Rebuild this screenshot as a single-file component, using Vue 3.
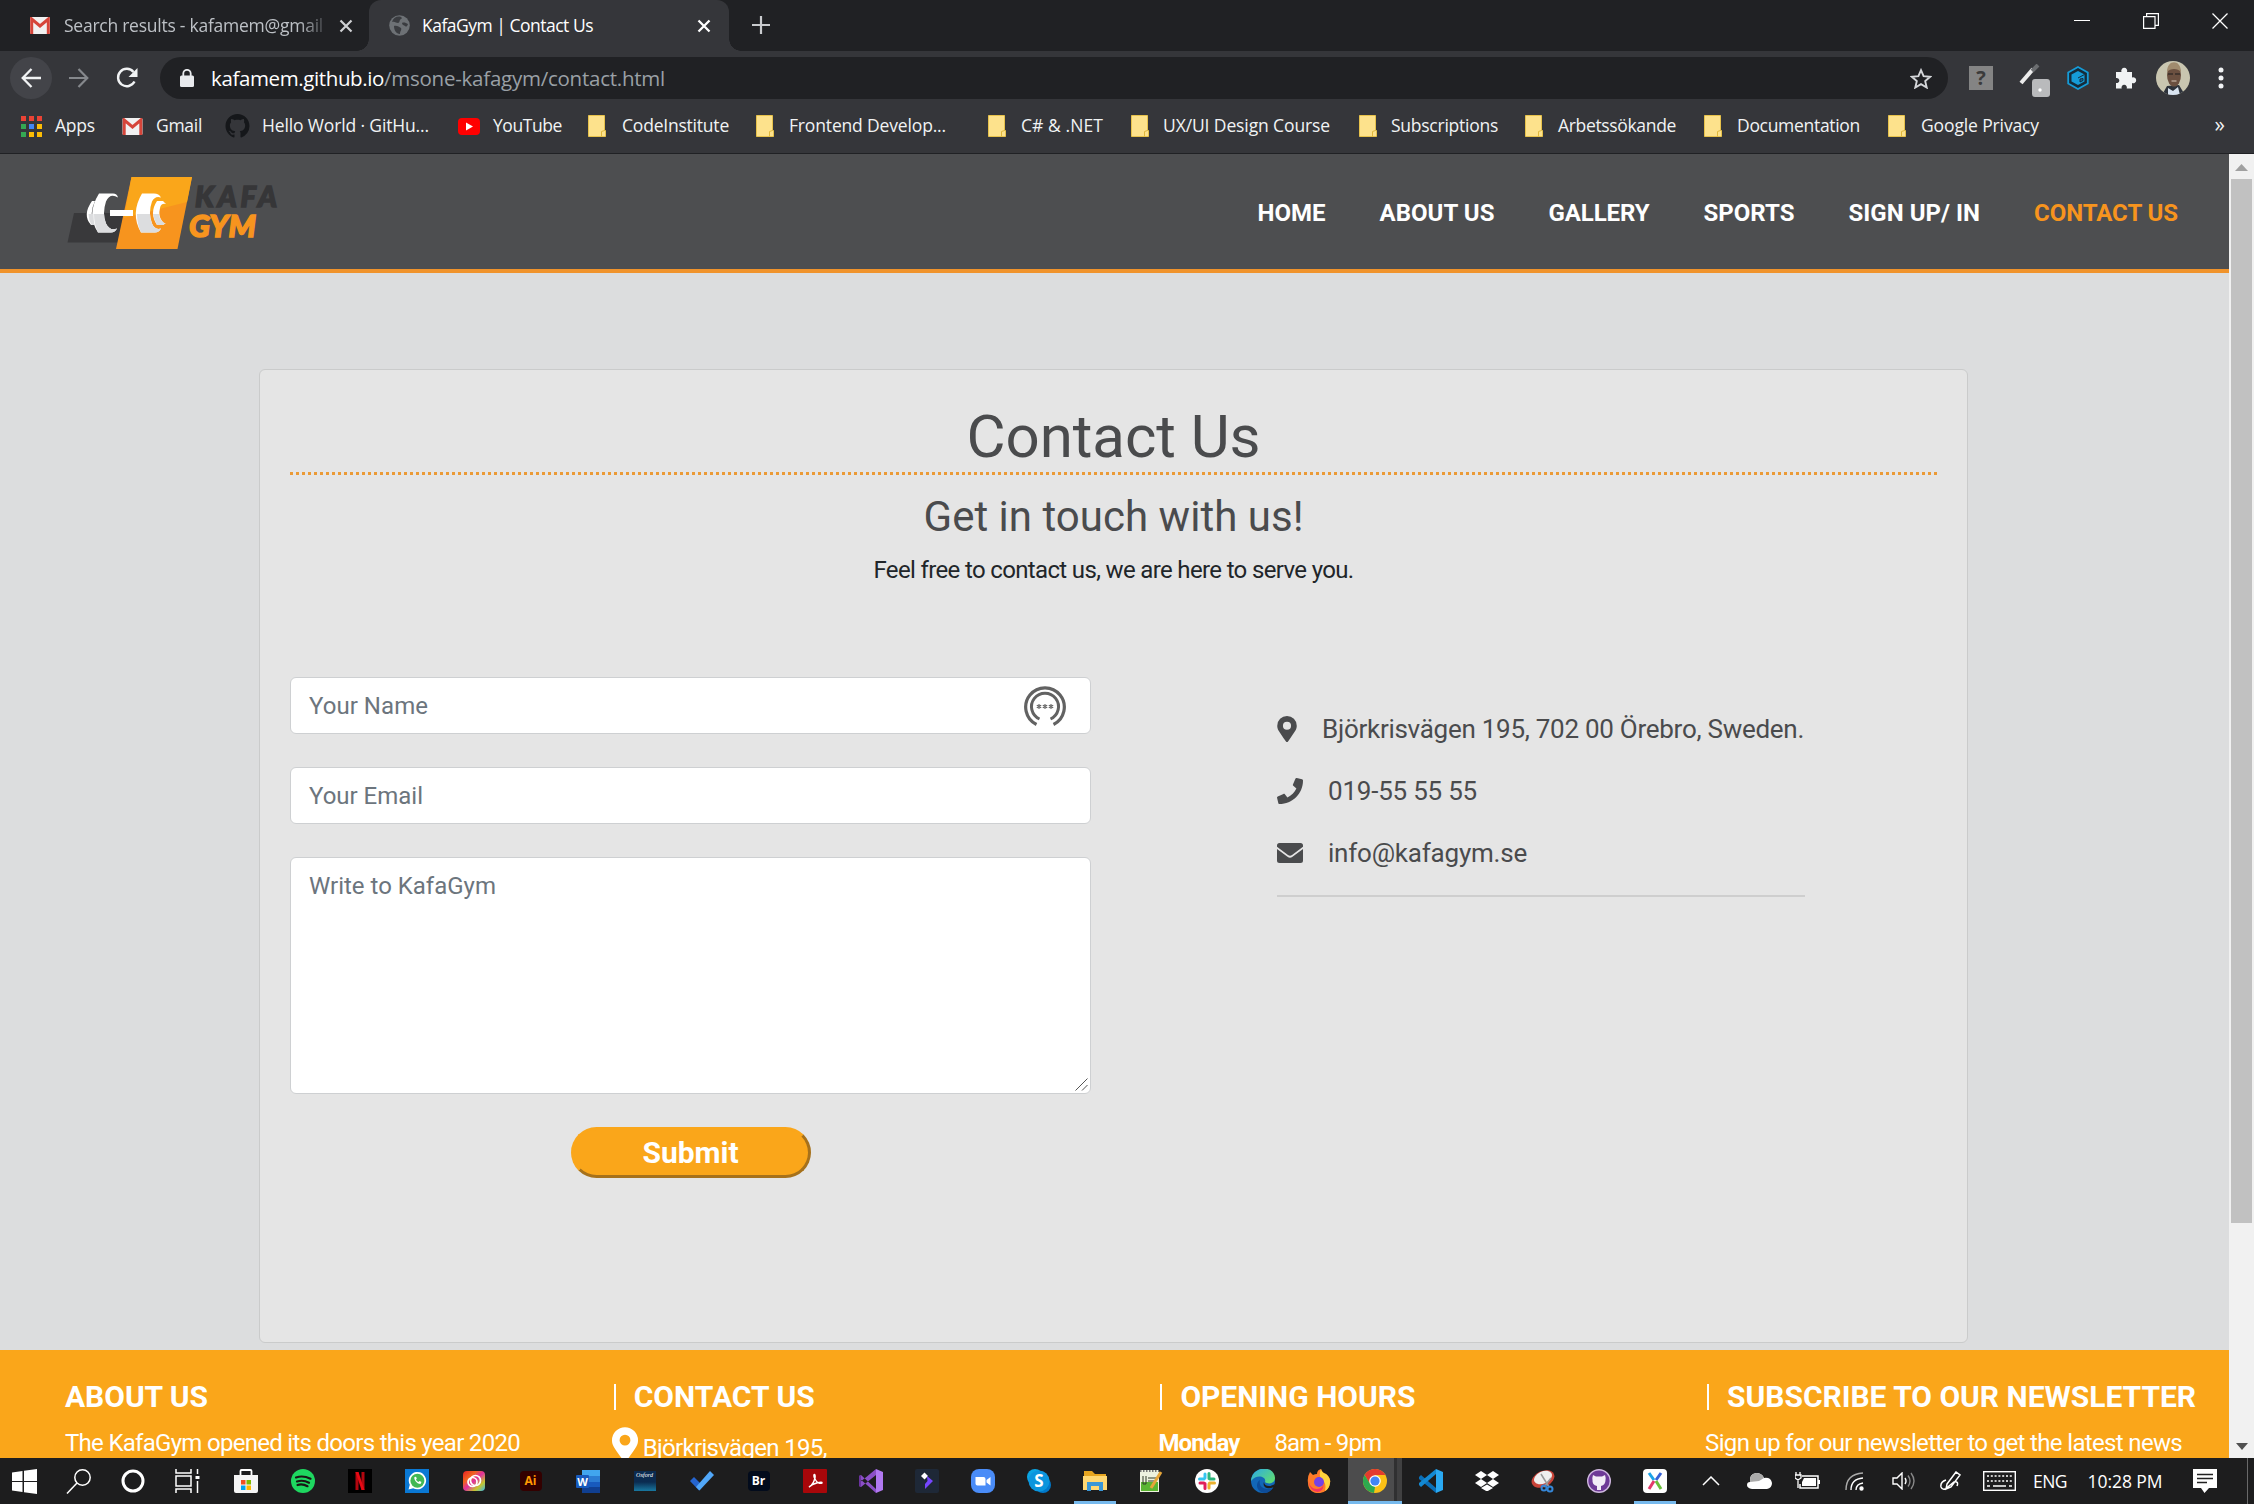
<script setup>
const vFit = {
  mounted(el, { value }) {
    const width = el.getBoundingClientRect().width
    el.style.letterSpacing = `${(value - width) / el.textContent.length}px`
  },
}

const bookmarks = [
  { label: 'Apps', icon: 'apps', slot: 34, text: 40, width: 101 },
  { label: 'Gmail', icon: 'gmail', slot: 34, text: 46, width: 103 },
  { label: 'Hello World · GitHu...', icon: 'github', slot: 37, text: 167, width: 233 },
  { label: 'YouTube', icon: 'youtube', slot: 35, text: 69, width: 130 },
  { label: 'CodeInstitute', icon: 'folder', slot: 34, text: 107, width: 168 },
  { label: 'Frontend Develop...', icon: 'folder', slot: 33, text: 157, width: 232 },
  { label: 'C# & .NET', icon: 'folder', slot: 33, text: 82, width: 143 },
  { label: 'UX/UI Design Course', icon: 'folder', slot: 32, text: 167, width: 228 },
  { label: 'Subscriptions', icon: 'folder', slot: 32, text: 107, width: 166 },
  { label: 'Arbetssökande', icon: 'folder', slot: 33, text: 118, width: 179 },
  { label: 'Documentation', icon: 'folder', slot: 33, text: 123, width: 184 },
  { label: 'Google Privacy', icon: 'folder', slot: 33, text: 118, width: 160 },
]

const nav = [
  { label: 'HOME', width: 68 },
  { label: 'ABOUT US', width: 115 },
  { label: 'GALLERY', width: 101 },
  { label: 'SPORTS', width: 91 },
  { label: 'SIGN UP/ IN', width: 131.5 },
  { label: 'CONTACT US', width: 144, active: true },
]

const apps = [
  'store', 'spotify', 'netflix', 'whatsapp', 'cc', 'ai', 'word', 'oxford', 'todo', 'br',
  'acrobat', 'vs', 'filmora', 'zoom', 'skype', 'explorer', 'notepad', 'slack', 'edge',
  'firefox', 'chrome', 'vscode', 'dropbox', 'snip', 'ghdesktop', 'xd',
]
</script>

<template>
  <div class="screen">
    <div class="tabs">
      <div class="tab tab-idle">
        <svg class="fav" width="20" height="17" viewBox="0 0 20 17"><rect width="20" height="17" rx="1.5" fill="#f1f1f1"/><path d="M1.7 17V2L10 9l8.300-7v15" fill="none" stroke="#d6453a" stroke-width="3"/></svg>
        <span class="tab-title faded"><span v-fit="259">Search results - kafamem@gmail</span></span>
        <svg class="tab-x" width="14" height="14" viewBox="0 0 14 14"><path d="M1.500 1.500l11 11M12.500 1.500l-11 11" stroke="#cfd1d4" stroke-width="2.200"/></svg>
      </div>
      <div class="tab tab-active">
        <svg class="fav" width="21" height="21" viewBox="0 0 21 21"><circle cx="10.500" cy="10.500" r="10.300" fill="#6d7175"/><path d="M3 7c3-1 4 1 6 1s1-3 3-4 0-2-1-2.500C7 1 4 3 3 7zM5 11c3-1 5 1 7 2 1 2-1 3-1 6-4 0-6-4-6-8zM13 8c2-1 4 0 6 1-1 3-2 3-3 2s-3-1-3-3z" fill="#3a3c40"/></svg>
        <span class="tab-title"><span v-fit="171">KafaGym | Contact Us</span></span>
        <svg class="tab-x" width="14" height="14" viewBox="0 0 14 14"><path d="M1.500 1.500l11 11M12.500 1.500l-11 11" stroke="#fff" stroke-width="2.300"/></svg>
      </div>
      <svg class="plus" width="18" height="18" viewBox="0 0 18 18"><path d="M9 0v18M0 9h18" stroke="#c9cbce" stroke-width="2.200"/></svg>
      <div class="window-buttons">
        <svg width="16" height="16" viewBox="0 0 16 16"><path d="M0 7.500h16" stroke="#fff"/></svg>
        <svg width="16" height="16" viewBox="0 0 16 16" fill="none" stroke="#fff" stroke-width="1.200"><path d="M.600 3.600h11.400v11.800H.600zM3.600 3.500V.600h11.800v11.800H12"/></svg>
        <svg width="16" height="16" viewBox="0 0 16 16"><path d="M.500.500l15 15M15.500.500l-15 15" stroke="#fff" stroke-width="1.300"/></svg>
      </div>
    </div>

    <div class="toolbar">
      <div class="round"><svg width="20" height="20" viewBox="0 0 20 20" fill="none" stroke="#f1f3f4" stroke-width="2.300"><path d="M20 10H2M10.500 1L1.700 10l8.800 9"/></svg></div>
      <svg class="forward" width="20" height="20" viewBox="0 0 20 20" fill="none" stroke="#85888c" stroke-width="2.200"><path d="M0 10h18M9.500 1l8.800 9-8.800 9"/></svg>
      <svg class="reload" width="22" height="22" viewBox="0 0 22 22"><path d="M18.500 14.500A8.700 8.700 0 1 1 17.500 5" fill="none" stroke="#f1f3f4" stroke-width="2.400"/><path d="M21.500 1v9h-9z" fill="#f1f3f4"/></svg>
      <div class="omnibox">
        <svg width="14" height="18" viewBox="0 0 14 18"><rect x="0" y="6.500" width="14" height="11.500" rx="1.500" fill="#e8eaed"/><path d="M3.300 7V4.500a3.700 3.700 0 0 1 7.400 0V7" fill="none" stroke="#e8eaed" stroke-width="1.800"/></svg>
        <span class="url"><span class="host" v-fit="173">kafamem.github.io</span><span v-fit="281">/msone-kafagym/contact.html</span></span>
        <svg class="star" width="22" height="21" viewBox="0 0 22 21"><path d="M11 2.200l2.600 6 6.500.600-4.900 4.300 1.500 6.400-5.700-3.400-5.700 3.400 1.500-6.400L1.900 8.800l6.500-.600z" fill="none" stroke="#d5d7da" stroke-width="1.900"/></svg>
      </div>
      <div class="question">?</div>
      <svg class="dropper" width="32" height="34" viewBox="0 0 32 34"><path d="M2 19L14 5" stroke="#ececec" stroke-width="4"/><path d="M13 7l6-6" stroke="#6b6d70" stroke-width="4"/><rect x="13" y="15" width="18" height="18" rx="3" fill="#b9babc"/><circle cx="21" cy="26" r="1.700" fill="#fff"/></svg>
      <svg class="hex" width="22" height="24" viewBox="0 0 22 24"><path d="M11 1l9.800 5.500v11L11 23l-9.800-5.500v-11z" fill="#152b3a" stroke="#159bd7" stroke-width="1.800"/><path d="M11 5l6.500 3.500v7L11 19l-6.500-3.500v-7z" fill="#159bd7"/><path d="M11 12l6.500-3.500M13 13v3l3-1.500v-2z" stroke="#152b3a" fill="#0e6fa5"/></svg>
      <svg class="puzzle" width="22" height="22" viewBox="0 0 22 22"><path d="M1 5h5.500a3 3 0 1 1 5.500 0H17v5.500a3 3 0 1 1 0 5.500v5.500h-5.300a2.700 2.700 0 1 0-5 0H1v-5.500a2.600 2.600 0 1 0 0-5z" fill="#f1f3f4"/></svg>
      <svg class="avatar" width="34" height="34" viewBox="0 0 34 34"><defs><clipPath id="face"><circle cx="17" cy="17" r="17"/></clipPath></defs><g clip-path="url(#face)"><rect width="34" height="34" fill="#c9c6b0"/><path d="M6 34l5-9 12-1 6 10z" fill="#2e333b"/><path d="M12 27l5 3 5-4 2 8H12z" fill="#d9e4f0"/><ellipse cx="18" cy="14" rx="7" ry="11.500" fill="#6b5040"/><path d="M11 11c0-13 14-13 14 0-3-4-11-4-14 0z" fill="#a08b6e"/><path d="M12 13h5M19 13h5" stroke="#382e29" stroke-width="1.300"/><path d="M15.500 20h5" stroke="#d9c7b8"/></g></svg>
      <svg class="dots" width="6" height="22" viewBox="0 0 6 22" fill="#f1f3f4"><circle cx="3" cy="3" r="2.500"/><circle cx="3" cy="11" r="2.500"/><circle cx="3" cy="19" r="2.500"/></svg>
    </div>

    <div class="bookmarks">
      <div v-for="b in bookmarks" :key="b.label" class="bookmark" :style="{ width: b.width + 'px' }">
        <span class="mark" :style="{ width: b.slot + 'px' }">
          <svg v-if="b.icon === 'apps'" width="21" height="21" viewBox="0 0 21 21"><path d="M0 0h5v5H0zM8 0h5v5H8zM16 0h5v5h-5z" fill="#ea4335"/><path d="M0 8h5v5H0zM0 16h5v5H0z" fill="#34a853"/><path d="M8 8h5v5H8z" fill="#4285f4"/><path d="M16 8h5v5h-5zM8 16h5v5H8zM16 16h5v5h-5z" fill="#fbbc05"/></svg>
          <svg v-else-if="b.icon === 'gmail'" width="21" height="17" viewBox="0 0 20 17"><rect width="20" height="17" rx="1.500" fill="#f1f1f1"/><path d="M1.700 17V2L10 9l8.300-7v15" fill="none" stroke="#d6453a" stroke-width="3"/></svg>
          <svg v-else-if="b.icon === 'github'" width="25" height="24" viewBox="0 0 16 16"><path fill="#15171a" d="M8 0C3.580 0 0 3.580 0 8c0 3.540 2.290 6.530 5.470 7.590.4.070.55-.17.55-.38 0-.19-.01-.82-.01-1.490-2.010.37-2.530-.49-2.690-.94-.09-.23-.48-.94-.82-1.130-.28-.15-.68-.52-.01-.53.63-.01 1.080.58 1.230.82.720 1.210 1.870.87 2.330.66.070-.52.280-.87.510-1.070-1.780-.2-3.640-.89-3.640-3.950 0-.87.310-1.590.82-2.150-.08-.2-.36-1.020.08-2.120 0 0 .67-.21 2.200.82.640-.18 1.320-.27 2-.27s1.360.09 2 .27c1.530-1.040 2.200-.82 2.200-.82.440 1.100.16 1.920.08 2.120.51.560.82 1.270.82 2.150 0 3.070-1.870 3.750-3.650 3.950.29.25.54.73.54 1.480 0 1.070-.01 1.930-.01 2.200 0 .21.15.46.55.38A8 8 0 0 0 16 8c0-4.420-3.580-8-8-8z"/></svg>
          <svg v-else-if="b.icon === 'youtube'" width="22" height="17" viewBox="0 0 22 17"><rect width="22" height="17" rx="4" fill="#f00"/><path d="M8 4.500v8l7-4z" fill="#fff"/></svg>
          <svg v-else width="18" height="22" viewBox="0 0 18 22"><path d="M.500.500h16v15h1v6H.500z" fill="#fde28c" stroke="#e7c24b"/><path d="M13.500 21.500v-5l3-1" fill="none" stroke="#e0b83c"/></svg>
        </span>
        <span class="label" v-fit="b.text">{{ b.label }}</span>
      </div>
      <span class="more">»</span>
    </div>

    <div class="viewport">
      <div class="page">
        <header class="site-header">
          <svg class="logo" width="216" height="76" viewBox="66 175 216 76">
            <path d="M74 213h50l-6 29.500H67.500z" fill="#39393b"/>
            <path d="M131.500 177H192l-14.500 72H116z" fill="#f7941e"/>
            <path d="M131.500 177H192l-5 25-63 16z" fill="#faa61a"/>
            <path d="M99 193.500h14q4 0 5 4-8-5-12 4-4 12 0 22 4 8 11 5-2 4-6 4H98q-12-18 1-39z" fill="#fff"/>
            <path d="M92 201h3q-6 12-1 24h-3q-9-10 1-24z" fill="#fff"/>
            <path d="M110 210h23v6h-23z" fill="#fff"/>
            <path d="M142 193.500h12q5 0 7 4-6-2-9 4-4 11 0 22 3 7 9 5-2 4-6 4h-14q-11-19 1-39z" fill="#fff"/>
            <path d="M157 201h6l3 3q-5-1-6 4-2 8 2 13 2 3 4 2l-3 2h-6q-8-12 0-24z" fill="#fff"/>
            <path d="M88.500 214h5q0 6 1 11h-3q-3-5-3-11zM94 214h10q0 5 2 9.500 4 8 11 5-2 4-6 4H98q-4-8-4-18.500zM137 214h13q0 5 2 9.500 3 7 9 5-2 4-6 4h-14q-4-8-4-18.500zM153 214h6q0 4 3 7t4 2l-3 2h-6q-3-5-4-11z" fill="#dcdddf"/>
            <text x="195" y="206.500" textLength="82" class="logo-kafa">KAFA</text>
            <text x="189" y="236.500" textLength="67" class="logo-gym">GYM</text>
          </svg>
          <nav><a v-for="n in nav" :key="n.label" :class="{ current: n.active }"><span v-fit="n.width">{{ n.label }}</span></a></nav>
        </header>

        <main>
          <section class="card">
            <h1><span v-fit="294">Contact Us</span></h1>
            <h2><span v-fit="380">Get in touch with us!</span></h2>
            <p class="lead"><span v-fit="480">Feel free to contact us, we are here to serve you.</span></p>
            <div class="columns">
              <form>
                <div class="field"><span v-fit="119">Your Name</span>
                  <svg width="42" height="42" viewBox="0 0 42 42" fill="none" stroke="#626262"><path d="M12.500 39.500a19.300 19.300 0 1 1 17 0" stroke-width="3.200"/><path d="M15.500 34a13.500 13.500 0 1 1 11 0" stroke-width="3"/><path d="M15 19v5M12.800 20.200l4.400 2.600M17.200 20.200l-4.400 2.600M21 19v5M18.800 20.200l4.400 2.600M23.200 20.200l-4.400 2.600M27 19v5M24.800 20.200l4.400 2.600M29.200 20.200l-4.400 2.600" stroke-width="1.100"/></svg>
                </div>
                <div class="field"><span v-fit="114">Your Email</span></div>
                <div class="field message"><span v-fit="187">Write to KafaGym</span>
                  <svg class="grip" width="13" height="13" viewBox="0 0 13 13"><path d="M.500 12.500l12-12M7 12.500L12.500 7" stroke="#555"/></svg>
                </div>
                <button type="button"><span v-fit="96">Submit</span></button>
              </form>
              <address>
                <div><svg class="i-pin" width="20" height="26" viewBox="0 0 384 512"><path fill="#4a4b4d" d="M172 502C27 291 0 270 0 192a192 192 0 1 1 384 0c0 78-27 99-172 310a24 24 0 0 1-40 0zM192 272a80 80 0 1 0 0-160 80 80 0 0 0 0 160z"/></svg><span v-fit="482">Björkrisvägen 195, 702 00 Örebro, Sweden.</span></div>
                <div><svg class="i-wide" width="26" height="26" viewBox="0 0 512 512"><path fill="#4a4b4d" d="M493 25L389 1c-11-3-23 3-27 14l-48 112c-4 10-1 21 7 28l61 50c-36 76-99 139-177 177l-50-61c-7-8-18-11-28-7L15 362C4 366-2 378 1 389l24 104c2 11 12 19 23 19 256 0 464-207 464-464 0-11-8-21-19-23z"/></svg><span v-fit="149">019-55 55 55</span></div>
                <div><svg class="i-wide" width="26" height="20" viewBox="0 0 26 20"><path fill="#4a4b4d" d="M2.500 0h21A2.500 2.500 0 0 1 26 2.500v1.300L15 12q-2 1.500-4 0L0 3.800V2.500A2.500 2.500 0 0 1 2.500 0zM0 6l10.500 7.800q2.500 1.800 5 0L26 6v11.500a2.500 2.500 0 0 1-2.500 2.500h-21A2.500 2.500 0 0 1 0 17.500z"/></svg><span v-fit="199">info@kafagym.se</span></div>
              </address>
            </div>
          </section>
        </main>

        <footer>
          <div><h3><span v-fit="143">ABOUT US</span></h3><p><span v-fit="455">The KafaGym opened its doors this year 2020</span></p></div>
          <div><h3 class="bar"><span v-fit="181">CONTACT US</span></h3><p class="place"><svg width="26" height="35" viewBox="0 0 384 512"><path fill="#fff" d="M172 502C27 291 0 270 0 192a192 192 0 1 1 384 0c0 78-27 99-172 310a24 24 0 0 1-40 0zM192 272a80 80 0 1 0 0-160 80 80 0 0 0 0 160z"/></svg><span v-fit="184">Björkrisvägen 195,</span></p></div>
          <div><h3 class="bar"><span v-fit="235">OPENING HOURS</span></h3><p><b v-fit="81">Monday</b><span class="hours" v-fit="107">8am - 9pm</span></p></div>
          <div><h3 class="bar"><span v-fit="469">SUBSCRIBE TO OUR NEWSLETTER</span></h3><p><span v-fit="477">Sign up for our newsletter to get the latest news</span></p></div>
        </footer>
      </div>
      <div class="scrollbar">
        <svg width="13" height="8" viewBox="0 0 13 8"><path d="M6.500 1L13 8H0z" fill="#a0a0a0"/></svg>
        <div class="thumb"></div>
        <svg class="down" width="12" height="7" viewBox="0 0 12 7"><path d="M0 0h12L6 7z" fill="#505050"/></svg>
      </div>
    </div>

    <div class="taskbar">
      <div class="sys win"><svg width="25" height="25" viewBox="0 0 25 25" fill="#fff"><path d="M0 3.500l10.500-1.500v10H0zM12 1.800L25 0v12H12zM0 13h10.500v10L0 21.500zM12 13h13v12l-13-1.800z"/></svg></div>
      <div class="sys"><svg width="26" height="25" viewBox="0 0 26 25" fill="none" stroke="#fff" stroke-width="1.500"><circle cx="16.500" cy="8.500" r="7.700"/><path d="M11 14L1 24.500"/></svg></div>
      <div class="sys"><svg width="24" height="24" viewBox="0 0 24 24"><circle cx="12" cy="12" r="10" fill="none" stroke="#fff" stroke-width="3"/></svg></div>
      <div class="sys"><svg width="25" height="24" viewBox="0 0 25 24" fill="none" stroke="#fff" stroke-width="1.500"><path d="M1 0v4h15V0M1 7h15v10H1zM1 24v-4h15v4M22.500 0v5M22.500 12v12"/><path d="M20.500 7h4v3h-4z" fill="#fff" stroke="none"/></svg></div>
      <div v-for="(a, i) in apps" :key="a" class="app" :class="[a, { slim: i > 9 }]">
        <svg v-if="a === 'store'" width="24" height="25" viewBox="0 0 24 25"><path d="M6.500 8V2q0-1 1-1h9q1 0 1 1v6" fill="none" stroke="#fff" stroke-width="1.800"/><path d="M0 6h24v16q0 2-2 2H2q-2 0-2-2z" fill="#f5f5f5"/><path d="M7 11h4.500v4.500H7z" fill="#f25022"/><path d="M12.500 11H17v4.500h-4.500z" fill="#7fba00"/><path d="M7 16.500h4.500V21H7z" fill="#00a4ef"/><path d="M12.500 16.500H17V21h-4.500z" fill="#ffb900"/></svg>
        <svg v-else-if="a === 'spotify'" width="24" height="24" viewBox="0 0 24 24"><circle cx="12" cy="12" r="12" fill="#1ed760"/><path d="M5 8.500q7-2.500 14.500 1.200M6 12.500q6-2 12 1.200M6.500 16q5-1.500 10 1.200" fill="none" stroke="#191414" stroke-width="2.200" stroke-linecap="round"/></svg>
        <svg v-else-if="a === 'netflix'" width="24" height="24" viewBox="0 0 24 24"><path fill="#000" d="M0 0h24v24H0z"/><path d="M7.500 3h3v18h-3zM13.500 3h3v18h-3z" fill="#b1060f"/><path d="M7.500 3h3l6 18h-3z" fill="#e50914"/></svg>
        <svg v-else-if="a === 'whatsapp'" width="24" height="24" viewBox="0 0 24 24"><path fill="#0a78d4" d="M0 0h24v24H0z"/><path d="M3.500 20.500l1.300-4.700a8.700 8.700 0 1 1 3.400 3.400z" fill="#fff"/><circle cx="12.400" cy="11.700" r="7" fill="#42b855"/><path d="M9.500 8c-1 2 2 7 6 7l1-2-2-1-1 1q-2-1-2.500-2.500l.800-1L11 7.700z" fill="#fff"/></svg>
        <svg v-else-if="a === 'cc'" width="22" height="20" viewBox="0 0 22 20"><defs><linearGradient id="rainbow" x2="1" y2="1"><stop stop-color="#e91f26"/><stop offset=".3" stop-color="#f0641f"/><stop offset=".5" stop-color="#e02fa0"/><stop offset=".75" stop-color="#c6c62e"/><stop offset="1" stop-color="#35b8f1"/></linearGradient></defs><rect width="22" height="20" rx="4" fill="url(#rainbow)"/><circle cx="9.500" cy="11" r="4.500" fill="none" stroke="#fff" stroke-width="1.700"/><circle cx="12.500" cy="9.500" r="5" fill="none" stroke="#fff" stroke-width="1.700"/></svg>
        <span v-else-if="a === 'ai'" class="tile tile-ai">Ai</span>
        <svg v-else-if="a === 'word'" width="24" height="23" viewBox="0 0 24 23"><path fill="#41a5ee" d="M6 0h18v6H6z"/><path fill="#2b7cd3" d="M6 6h18v6H6z"/><path fill="#185abd" d="M6 12h18v5H6z"/><path fill="#103f91" d="M6 17h18v6H6z"/><rect y="5" width="13" height="13" rx="1" fill="#185abd"/><text x="6.500" y="15.500" text-anchor="middle" class="glyph">W</text></svg>
        <span v-else-if="a === 'oxford'" class="tile tile-ox"><i>Oxford</i></span>
        <svg v-else-if="a === 'todo'" width="24" height="20" viewBox="0 0 24 20"><path d="M0 10l4-4 9 9-4 4.500z" fill="#2564cf"/><path d="M6 16L20 0l4 4L9.500 19.500z" fill="#51a7f9"/></svg>
        <span v-else-if="a === 'br'" class="tile tile-br">Br</span>
        <svg v-else-if="a === 'acrobat'" width="24" height="24" viewBox="0 0 24 24"><rect width="24" height="24" rx="1" fill="#a8070a"/><path d="M6 18c3-1 7-8 6-12-1-2-2 1 0 4 2 4 5 5 7 4 1-2-9 0-13 4z" fill="none" stroke="#fff" stroke-width="1.400"/></svg>
        <svg v-else-if="a === 'vs'" width="24" height="24" viewBox="0 0 24 24"><path d="M17 0l7 3v18l-7 3z" fill="#b179f1"/><path d="M0 7l2-1 15 14v4L0 9zM0 17l2 1L17 6V0L0 14z" fill="#8b4fc7"/><path d="M0 7l2-1v12l-2-1z" fill="#6a339f"/></svg>
        <svg v-else-if="a === 'filmora'" width="24" height="24" viewBox="0 0 24 24"><rect width="24" height="24" rx="2" fill="#1e2837"/><path d="M6 7l3.500-3.500L13 7l-3.500 3.500z" fill="#fff"/><path d="M12 7l6 5-8 8v-5l2.500-3z" fill="#7646ff"/></svg>
        <svg v-else-if="a === 'zoom'" width="24" height="24" viewBox="0 0 24 24"><rect width="24" height="24" rx="8" fill="#4a8cf7"/><path d="M4.500 8h8q2 0 2 2v6.500h-8q-2 0-2-2zM15.500 11l4-3v8.500l-4-3z" fill="#fff"/></svg>
        <svg v-else-if="a === 'skype'" width="24" height="24" viewBox="0 0 24 24"><circle cx="8" cy="8" r="8" fill="#0aa5e3"/><circle cx="16" cy="16" r="8" fill="#0078ca"/><circle cx="12" cy="12" r="10.500" fill="#0b95dd"/><text x="12" y="18" text-anchor="middle" class="glyph big">S</text></svg>
        <svg v-else-if="a === 'explorer'" width="24" height="20" viewBox="0 0 24 20"><path d="M1 0h8l3 3h11v6H1z" fill="#e6a520"/><path d="M0 5h24v14H0z" fill="#ffd873"/><path d="M4 20v-9h16v9h-4v-5H8v5z" fill="#3a97d7"/></svg>
        <svg v-else-if="a === 'notepad'" width="24" height="24" viewBox="0 0 24 24"><path d="M1 1h19v22H1z" fill="#eef2df"/><path d="M2 13h17v9H2z" fill="#5ab532"/><path d="M1 2h19" stroke="#777" stroke-width="2" stroke-dasharray="1.500"/><path d="M4 7v8h3V7M9 9h9M9 12h7" stroke="#303b28" fill="none"/><path d="M22 3L12 19" stroke="#e6a539" stroke-width="3"/></svg>
        <svg v-else-if="a === 'slack'" width="24" height="24" viewBox="0 0 24 24"><circle cx="12" cy="12" r="12" fill="#fff"/><g stroke-width="3" stroke-linecap="round"><path d="M10 5v4M4.500 10H9" stroke="#36c5f0"/><path d="M14 4.500v5M15 10h4" stroke="#2eb67d"/><path d="M14 15v4M14.500 14h5" stroke="#ecb22e"/><path d="M10 14.500v5M5 14h4" stroke="#e01e5a"/></g></svg>
        <svg v-else-if="a === 'edge'" width="24" height="24" viewBox="0 0 24 24"><defs><linearGradient id="sea" x2="1" y2=".7"><stop stop-color="#2aa8ea"/><stop offset="1" stop-color="#5edb76"/></linearGradient></defs><circle cx="12" cy="12" r="12" fill="#1267b7"/><path d="M0 12C1-4 24-4 24 9c0 5-6 7-10 4 2-5-8-9-14-1z" fill="url(#sea)"/><path d="M9 11c-2 7 5 11 13 8-2 3-5 5-8 5C5 23 4 14 9 11z" fill="#0d4c99"/><path d="M13 13c0 4 5 5 9 3l2-1-1 3c-6 3-12 0-10-5z" fill="#1e1e1e"/></svg>
        <svg v-else-if="a === 'firefox'" width="24" height="24" viewBox="0 0 24 24"><path d="M3 3l3 3q2-1 4-1 0-4 4-5 1 4 5 5 5 4 4 9c-1 13-22 14-22 0Q0 8 3 3z" fill="#ff7b29"/><path d="M14 0q1 4 5 5 5 4 4 9-1 6-5 8 2-8-3-11-4-4-1-11z" fill="#ffd43c"/><circle cx="12" cy="13" r="5" fill="#7542e5"/><path d="M1.500 12q2 8 8 8 5 0 7-4 0 6-6 7-8-1-9-11z" fill="#f5355e"/></svg>
        <svg v-else-if="a === 'chrome'" width="24" height="24" viewBox="0 0 24 24"><circle cx="12" cy="12" r="12" fill="#fbc116"/><path d="M1.600 6A12 12 0 0 1 22.400 6H12L7 15z" fill="#e33b2e"/><path d="M1.600 6l5.600 9 4.800 3-1 6A12 12 0 0 1 1.600 6z" fill="#2da94f"/><circle cx="12" cy="12" r="5.800" fill="#fff"/><circle cx="12" cy="12" r="4.600" fill="#4285f4"/></svg>
        <svg v-else-if="a === 'vscode'" width="24" height="24" viewBox="0 0 24 24"><path d="M17 0l7 3v18l-7 3z" fill="#2aa9f2"/><path d="M0 8l2-2 15 13v5L0 10z" fill="#0a6fb8"/><path d="M0 16l2 2L17 5V0L0 14z" fill="#1389d3"/></svg>
        <svg v-else-if="a === 'dropbox'" width="24" height="20" viewBox="0 0 24 20" fill="#fff"><path d="M6 0l6 4-6 4-6-4zM18 0l6 4-6 4-6-4zM6 8l6 4-6 4-6-4zM18 8l6 4-6 4-6-4zM12 13.500l6 3.500-6 3.500L6 17z"/></svg>
        <svg v-else-if="a === 'snip'" width="24" height="24" viewBox="0 0 24 24"><ellipse cx="12" cy="10" rx="12" ry="8" transform="rotate(-25 12 10)" fill="#c94439"/><ellipse cx="12" cy="8.500" rx="9.500" ry="6" transform="rotate(-25 12 8.500)" fill="#efefef"/><path d="M10 5l8 13M20 9l-7 9" stroke="#999" stroke-width="1.500"/><circle cx="13" cy="19" r="2.500" fill="none" stroke="#3586d7" stroke-width="2"/><circle cx="19" cy="20" r="2.500" fill="none" stroke="#3586d7" stroke-width="2"/></svg>
        <svg v-else-if="a === 'ghdesktop'" width="24" height="24" viewBox="0 0 24 24"><circle cx="12" cy="12" r="11.300" fill="#6e3a97" stroke="#cfb8df" stroke-width="1.400"/><path d="M6 6l3 1.500h6L18 6q1 3 .500 5 0 5-4.500 6v4h-4v-4q-5-1-4.500-6Q5 9 6 6z" fill="#f3edf7"/></svg>
        <svg v-else width="24" height="24" viewBox="0 0 24 24"><rect width="24" height="24" rx="4" fill="#fff"/><path d="M6 4l5 7" stroke="#1aa3e8" stroke-width="3"/><path d="M18 4l-5 7" stroke="#3761d6" stroke-width="3"/><path d="M11 12l-5 8" stroke="#e23b6b" stroke-width="3"/><path d="M13 12l5 8" stroke="#6abf3a" stroke-width="3"/></svg>
      </div>
      <div class="tray">
        <div><svg width="18" height="10" viewBox="0 0 18 10"><path d="M1 9l8-8 8 8" fill="none" stroke="#fff" stroke-width="1.500"/></svg></div>
        <div><svg width="25" height="16" viewBox="0 0 25 16"><path d="M3 9Q2 1 9 0q6 0 8 5 7-1 8 5 0 5-5 6H5q-5-1-5-4 0-3 3-3z" fill="#fff"/><path d="M3 9Q2 1 9 0q6 0 8 5l-5 3z" fill="#aaa"/></svg></div>
        <div><svg width="25" height="18" viewBox="0 0 25 18"><path d="M7 4h16v12H5v-4" fill="none" stroke="#fff" stroke-width="1.500"/><path d="M9 6h12v8H7v-4zM23 8h2v4h-2z" fill="#fff"/><path d="M1 0v3M5 0v3M0 3h6v3l-3 2-3-2zM3 8v8" stroke="#fff" stroke-width="1.300" fill="none"/></svg></div>
        <div><svg width="20" height="19" viewBox="0 0 20 19" fill="none" stroke="#fff" stroke-width="1.400"><path d="M1 18Q1 2 18 1" stroke="#aaa"/><path d="M6 18Q6 7 18 6M11 18q0-6 7-7"/><circle cx="16.500" cy="16.500" r="1.500" fill="#fff"/></svg></div>
        <div><svg width="23" height="18" viewBox="0 0 23 18" fill="none" stroke="#fff" stroke-width="1.400"><path d="M1 6h4l5-5v16l-5-5H1zM13 6q2 3 0 6"/><path d="M16 3.500q4 5.500 0 11M19 1q6 8 0 16" stroke="#888"/></svg></div>
        <div><svg width="22" height="20" viewBox="0 0 22 20" fill="none" stroke="#fff" stroke-width="1.500"><path d="M7 13L16 1l4 3-9 12-5 2zM6 9q-6 2-5 7 2 5 8-1l5-4q5-1 3 4"/></svg></div>
        <div class="kbd"><svg width="33" height="20" viewBox="0 0 33 20" fill="none" stroke="#fff" stroke-width="1.400"><rect x=".7" y=".7" width="31.600" height="18.600"/><path d="M4 5h25M4 10h25" stroke-dasharray="2 1.800"/><path d="M4 15h3M10 15h13M26 15h3"/></svg></div>
        <div class="eng"><span v-fit="34">ENG</span></div>
        <div class="clock"><span v-fit="75">10:28 PM</span></div>
        <div class="note"><svg width="24" height="25" viewBox="0 0 24 25"><path d="M0 0h24v19h-8l-4.500 5L8 19H0z" fill="#fff"/><path d="M4 5.500h16M4 9.500h16M4 13.500h10" stroke="#222" stroke-width="1.500"/></svg></div>
      </div>
    </div>
  </div>
</template>

<style>
body { background: #202124; overflow: hidden; }
</style>

<style scoped>
* { box-sizing: border-box; }
svg { display: block; flex: none; }
span, b { white-space: nowrap; }
.screen { width: 2254px; height: 1504px; display: flex; flex-direction: column; overflow: hidden; font-family: "Open Sans", "Noto Sans", sans-serif; background: #35363a; }

.tabs { height: 51px; background: #202124; display: flex; align-items: stretch; color: #fff; font-size: 17.500px; }
.tab { display: flex; align-items: center; height: 51px; }
.tab-idle { width: 369px; padding-left: 30px; color: #bdc1c6; }
.tab-idle .tab-title { width: 261px; margin-left: 14px; overflow: hidden; mask-image: linear-gradient(90deg, #000 90%, rgba(0, 0, 0, .2)); }
.tab-idle .tab-x { margin-left: 14px; }
.tab-title { padding-bottom: 2px; }
.tab-title > span { display: inline-block; }
.tab-active { width: 360px; padding-left: 20px; background: #35363a; border-radius: 12px 12px 0 0; position: relative; }
.tab-active::before, .tab-active::after { content: ""; position: absolute; bottom: 0; width: 12px; height: 12px; }
.tab-active::before { left: -12px; background: radial-gradient(circle at 0 0, transparent 11.500px, #35363a 12px); }
.tab-active::after { right: -12px; background: radial-gradient(circle at 100% 0, transparent 11.500px, #35363a 12px); }
.tab-active .tab-title { width: 255px; margin-left: 12px; }
.tab-active .tab-x { margin-left: 20px; }
.plus { margin: 16px 0 0 23px; }
.window-buttons { margin-left: auto; display: flex; gap: 53px; padding: 13px 26px 0 0; }

.toolbar { height: 54px; display: flex; align-items: center; flex: none; }
.round { width: 42px; height: 42px; margin-left: 10px; border-radius: 50%; background: #434449; display: flex; align-items: center; justify-content: center; }
.forward { margin-left: 17px; }
.reload { margin-left: 27px; }
.omnibox { width: 1788px; height: 42px; margin-left: 22px; border-radius: 21px; background: #202124; display: flex; align-items: center; padding-left: 20px; }
.url { margin-left: 17px; font-size: 20.500px; color: #9aa0a6; display: flex; width: 1670px; }
.url .host { color: #fff; }
.star { margin-left: 29px; }
.question { width: 24px; height: 24px; margin-left: 21px; background: #848484; color: #3b3b3b; font-weight: 700; font-size: 20px; line-height: 24px; text-align: center; }
.dropper { margin: 6px 0 0 26px; }
.hex { margin-left: 16px; }
.puzzle { margin-left: 26px; }
.avatar { margin-left: 19px; }
.dots { margin-left: 28px; }

.bookmarks { height: 49px; flex: none; display: flex; align-items: center; padding: 0 29px 6px 21px; border-bottom: 1px solid #202124; color: #f1f3f4; font-size: 17.500px; }
.bookmark { display: flex; align-items: center; flex: none; }
.mark { flex: none; }
.label { padding-bottom: 2px; }
.more { margin-left: auto; font-size: 21px; padding-bottom: 4px; }

.viewport { height: 1304px; display: flex; font-family: Roboto, sans-serif; }
.page { width: 2229px; display: flex; flex-direction: column; background: #dcddde; overflow: hidden; }
.site-header { height: 119px; flex: none; background: #4d4e50; border-bottom: 4px solid #f0932b; display: flex; align-items: center; justify-content: space-between; padding: 0 51px 0 66px; }
.logo { margin-top: 3px; }
.logo-kafa, .logo-gym { font: italic 900 29px Lato, sans-serif; fill: #363638; stroke: #363638; stroke-width: 1.500; }
.logo-gym { fill: #f7941e; stroke: #f7941e; font-size: 31px; }
nav { display: flex; gap: 54px; font-weight: 700; font-size: 24px; color: #fff; padding-top: 2px; }
.current { color: #f7941e; }

main { height: 1077px; flex: none; padding: 96px 261px 0 259px; display: flex; justify-content: center; }
.card { width: 1709px; height: 974px; flex: none; background: #e5e5e5; border: 1px solid #cacbcb; border-radius: 6px; padding: 30px 30px 0; color: #4a4b4d; }
h1, h2, h3, p { margin: 0; font-weight: 400; }
h1 { height: 75px; line-height: 73px; font-size: 60px; text-align: center; border-bottom: 3px dotted #eb9a36; }
h2 { margin-top: 17px; height: 50px; line-height: 50px; font-size: 42px; text-align: center; }
.lead { margin-top: 10px; height: 36px; line-height: 36px; font-size: 24px; text-align: center; color: #212529; }
.columns { display: flex; margin-top: 89px; }
form { width: 801px; display: flex; flex-direction: column; gap: 33px; }
.field { height: 57px; border: 1px solid #ced0d2; border-radius: 6px; background: #fff; color: #6c757d; font-size: 24px; display: flex; align-items: center; justify-content: space-between; padding: 0 24px 0 18px; }
.message { height: 237px; align-items: flex-start; padding: 13px 2px 2px 18px; line-height: 30px; }
.grip { align-self: flex-end; }
button { align-self: center; width: 240px; height: 51px; border-radius: 26px; border: 3px solid; border-color: #faa61a #a6711b #a6711b #faa61a; background: #faa61a; color: #fff; font: 700 30px Roboto, sans-serif; padding: 0; }
address { width: 528px; height: 220px; margin-left: 186px; padding-top: 21px; border-bottom: 2px solid #cecece; font-style: normal; font-size: 26px; }
address > div { height: 62px; display: flex; align-items: center; }
.i-pin { margin-right: 25px; }
.i-wide { margin-right: 25px; }

footer { height: 108px; background: #faa61a; color: #fff; padding: 28px 0 0 65px; display: flex; }
footer > div { width: 546.700px; flex: none; }
h3 { height: 38px; line-height: 38px; font-size: 30px; font-weight: 700; display: flex; align-items: center; }
.bar::before { content: ""; width: 2px; height: 26px; background: #fff; margin: 0 18px 0 2px; }
footer p { height: 40px; line-height: 40px; margin-top: 7px; font-size: 24px; display: flex; }
.place { align-items: flex-start; }
.place svg { margin: 4px 5px 0 0; }
.place span { padding-top: 5px; }
.hours { margin-left: 35px; }

.scrollbar { width: 25px; background: #f1f1f1; display: flex; flex-direction: column; align-items: center; padding: 9px 0 8px; }
.thumb { width: 21px; height: 1044px; margin-top: 8px; background: #c1c1c1; }
.down { margin-top: auto; }

.taskbar { height: 46px; flex: none; background: #1d1d1e; display: flex; color: #fff; }
.sys { width: 54px; display: flex; align-items: center; justify-content: center; flex: none; }
.win { width: 52px; padding-right: 3px; }
.app { width: 57px; display: flex; align-items: center; justify-content: center; flex: none; border-bottom: 3px solid transparent; padding-top: 3px; }
.win + .sys + .sys + .sys { margin-right: 3px; }
.slim { width: 56px; }
.explorer { width: 42px; margin: 0 7px; border-color: #76b9ed; }
.chrome { width: 54px; margin-left: 1px; margin-right: 1px; padding-right: 5px; background: linear-gradient(90deg, #4c4c4d 46px, #303031 46px, #303031 49px, #404041 49px); border-color: #76b9ed; }
.xd { width: 42px; margin: 0 7px; border-color: #76b9ed; }
.chrome svg { margin-left: 5px; }
.tile { width: 22px; height: 20px; border-radius: 4px; font-size: 12px; line-height: 19px; font-weight: 700; text-align: center; }
.tile-ai { background: #330000; color: #ff9a00; }
.tile-br { background: #020b1c; }
.tile-ox { background: linear-gradient(#0b2b50 55%, #1878a0); border-radius: 0; font-size: 6px; line-height: 8px; font-family: "Liberation Serif", serif; font-weight: 400; }
.glyph { font: 700 11px "Open Sans", sans-serif; fill: #fff; }
.big { font-size: 17px; }
.tray { display: flex; margin-left: 4px; flex: 1; font-size: 17.500px; border-right: 1px solid #69696a; margin-right: 6px; }
.tray > div { width: 48px; flex: none; display: flex; align-items: center; justify-content: center; }
.tray > .kbd { width: 49px; }
.tray > .eng { width: 42px; padding-left: 10px; }
.tray > .clock { width: 97px; padding-left: 21px; }
.tray > .note { width: 58px; margin-left: 13px; }
</style>
